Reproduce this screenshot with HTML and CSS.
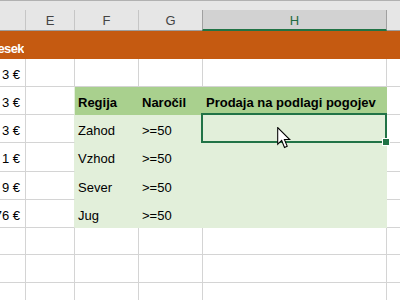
FILE: index.html
```html
<!DOCTYPE html>
<html lang="sl">
<head>
<meta charset="utf-8">
<link rel="stylesheet" href="styles.css">
</head>
<body>
<div class="sheet">
  <div class="topbar"></div>
  <div class="row heads">
    <div class="ch"></div>
    <div class="ch">E</div>
    <div class="ch">F</div>
    <div class="ch">G</div>
    <div class="ch sel">H</div>
    <div class="ch last"></div>
  </div>
  <div class="band"><div class="band-text">esek</div></div>
  <div class="row r28">
    <div class="c a"><span>3 €</span></div><div class="c"></div><div class="c"></div><div class="c"></div><div class="c"></div><div class="c last"></div>
  </div>
  <div class="row r28">
    <div class="c a"><span>3 €</span></div><div class="c e-edge"></div>
    <div class="c th">Regija</div><div class="c th">Naročil</div><div class="c th">Prodaja na podlagi pogojev</div><div class="c last"></div>
  </div>
  <div class="row r28">
    <div class="c a"><span>3 €</span></div><div class="c e-edge"></div>
    <div class="c td">Zahod</div><div class="c td">&gt;=50</div>
    <div class="c td cur"><div class="selection"><div class="handle"></div></div>
      <svg class="pointer" width="15" height="23" viewBox="0 0 14 22"><path d="M0.5 0.5 L0.5 16.5 L4.3 12.9 L7 19.6 L9.6 18.5 L6.9 12 L12 12 Z" fill="#fff" stroke="#000" stroke-width="1" stroke-linejoin="miter"/></svg>
    </div><div class="c last"></div>
  </div>
  <div class="row r29">
    <div class="c a"><span>1 €</span></div><div class="c e-edge"></div>
    <div class="c td">Vzhod</div><div class="c td">&gt;=50</div><div class="c td"></div><div class="c last"></div>
  </div>
  <div class="row r28">
    <div class="c a"><span>9 €</span></div><div class="c e-edge"></div>
    <div class="c td">Sever</div><div class="c td">&gt;=50</div><div class="c td"></div><div class="c last"></div>
  </div>
  <div class="row r28">
    <div class="c a"><span>76 €</span></div><div class="c e-edge"></div>
    <div class="c td">Jug</div><div class="c td">&gt;=50</div><div class="c td"></div><div class="c last"></div>
  </div>
  <div class="row r27">
    <div class="c a"></div><div class="c"></div><div class="c"></div><div class="c"></div><div class="c"></div><div class="c last"></div>
  </div>
  <div class="row r28">
    <div class="c a"></div><div class="c"></div><div class="c"></div><div class="c"></div><div class="c"></div><div class="c last"></div>
  </div>
  <div class="row r28">
    <div class="c a"></div><div class="c"></div><div class="c"></div><div class="c"></div><div class="c"></div><div class="c last"></div>
  </div>
</div>
</body>
</html>
```

FILE: styles.css
```css
html, body {
  margin: 0;
  padding: 0;
  background: #ffffff;
  overflow: hidden;
}
.sheet {
  width: 400px;
  height: 300px;
  overflow: hidden;
  font-family: "Liberation Sans", Arial, sans-serif;
  font-size: 13px;
  color: #000;
}
.topbar {
  height: 9px;
  border-top: 1px solid #b1b1b1;
  background: #e6e6e6;
}
.row {
  display: grid;
  grid-template-columns: 26px 49px 64px 64px 184px 1fr;
}
.heads {
  height: 20px;
  background: #e6e6e6;
  border-bottom: 1px solid #9d9d9d;
}
.ch {
  box-sizing: border-box;
  border-right: 1px solid #c6c6c6;
  display: flex;
  align-items: center;
  justify-content: center;
  color: #444;
  font-size: 13px;
  padding-top: 1px;
}
.ch.last { border-right: none; }
.ch.sel {
  background: #d2d2d2;
  color: #1e6b41;
  border-left: 1px solid #a0a0a0;
  border-right: 1px solid #a0a0a0;
  border-bottom: 2px solid #217346;
  margin-left: -1px;
  margin-bottom: -1px;
  position: relative;
  z-index: 1;
}
.band {
  height: 28px;
  background: #c55a11;
  display: flex;
}
.band-text {
  width: 24px;
  overflow: hidden;
  display: flex;
  justify-content: flex-end;
  color: #fff;
  font-weight: bold;
  white-space: nowrap;
  padding-top: 10px;
  box-sizing: border-box;
  line-height: 15px;
  letter-spacing: -0.6px;
}
.r28 { height: 28px; }
.r29 { height: 29px; }
.r27 { height: 27px; }
.c {
  box-sizing: border-box;
  border-right: 1px solid #d4d4d4;
  border-bottom: 1px solid #d4d4d4;
  white-space: nowrap;
  line-height: 15px;
  padding: 8px 3px 0 3px;
}
.c.last { border-right: none; }
.c.a {
  overflow: hidden;
  display: flex;
  justify-content: flex-end;
  padding-right: 5px;
  padding-left: 0;
}
.c.e-edge {
  border-right-color: #e2efda;
}
.c.th {
  background: #a9d08e;
  border-color: #a9d08e;
  font-weight: bold;
}
.c.td {
  background: #e2efda;
  border-color: #e2efda;
}
.cur { position: relative; }
.selection {
  position: absolute;
  left: -2px;
  top: -2px;
  width: 186px;
  height: 30px;
  box-sizing: border-box;
  border: 2px solid #217346;
  z-index: 2;
}
.handle {
  position: absolute;
  right: -4px;
  bottom: -4px;
  width: 6px;
  height: 6px;
  background: #217346;
  box-shadow: 0 0 0 1px #ffffff;
}
.pointer {
  position: absolute;
  left: 74px;
  top: 12px;
  z-index: 3;
}
```
